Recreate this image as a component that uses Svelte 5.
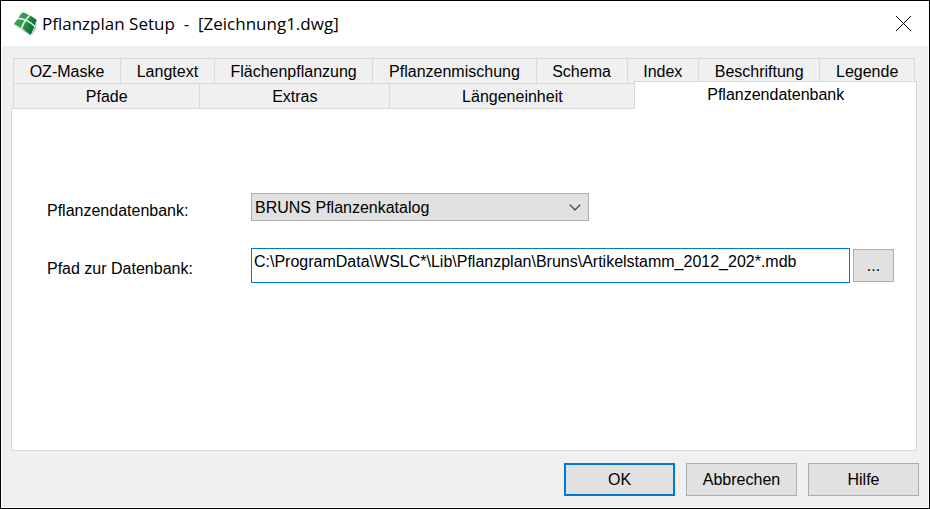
<script>
  const backTabs = ['OZ-Maske', 'Langtext', 'Flächenpflanzung', 'Pflanzenmischung', 'Schema', 'Index', 'Beschriftung', 'Legende'];
  const frontTabs = ['Pfade', 'Extras', 'Längeneinheit', 'Pflanzendatenbank'];
  let active = $state('Pflanzendatenbank');
  let path = $state('C:\\ProgramData\\WSLC*\\Lib\\Pflanzplan\\Bruns\\Artikelstamm_2012_202*.mdb');
</script>

<div class="dialog" role="dialog" aria-labelledby="dialog-title">
  <header>
    <svg class="logo" width="24" height="24" viewBox="0 0 24 24" aria-hidden="true">
      <defs>
        <linearGradient id="leaf" x1="0" y1="0.2" x2="1" y2="0.6">
          <stop offset="0" stop-color="#3fac58" />
          <stop offset="0.5" stop-color="#2b9a50" />
          <stop offset="1" stop-color="#04602e" />
        </linearGradient>
      </defs>
      <path d="M18.5 23.6 L24 8 L22.6 18 Z M1 13 L18 23.8 L15 20 Z" fill="#777" opacity="0.5" />
      <path d="M7.6 2.2 Q8.6 0.4 10.8 0.6 Q17.5 3.4 23.7 7.8 Q21.4 15.5 17.8 23 Q10.5 16.6 0.8 12 Q4.6 7.6 7.6 2.2 Z" fill="url(#leaf)" />
      <path d="M4 6.6 Q13.5 6.2 22 14.6 M16.6 3.4 Q10.5 9.5 8 18" fill="none" stroke="#e9f5ec" stroke-width="1.5" />
    </svg>
    <h1 id="dialog-title">Pflanzplan Setup&nbsp; -&nbsp; [Zeichnung1.dwg]</h1>
    <button class="close" aria-label="Schließen">
      <svg width="15" height="15" viewBox="0 0 15 15" aria-hidden="true">
        <path d="M0 0 L15 15 M15 0 L0 15" stroke="#000" stroke-width="1" />
      </svg>
    </button>
  </header>

  <main>
    <div class="tabs" role="tablist">
      {#each [backTabs, frontTabs] as row}
        <div class="row" role="presentation">
          {#each row as tab}
            <button role="tab" class="tab" class:active={tab === active} aria-selected={tab === active} onclick={() => (active = tab)}>{tab}</button>
          {/each}
        </div>
      {/each}
    </div>

    <section class="panel" role="tabpanel">
      <div class="field">
        <label for="database">Pflanzendatenbank:</label>
        <div class="select">
          <select id="database">
            <option>BRUNS Pflanzenkatalog</option>
          </select>
          <svg width="12" height="7" viewBox="0 0 12 7" aria-hidden="true">
            <path d="M0.7 0.7 L6 6 L11.3 0.7" fill="none" stroke="#333" stroke-width="1.2" />
          </svg>
        </div>
      </div>
      <div class="field">
        <label for="path">Pfad zur Datenbank:</label>
        <input id="path" type="text" bind:value={path} />
        <button class="button browse">...</button>
      </div>
    </section>
  </main>

  <footer>
    <button class="button default">OK</button>
    <button class="button">Abbrechen</button>
    <button class="button">Hilfe</button>
  </footer>
</div>

<style>
  :global(body) {
    margin: 0;
  }

  .dialog,
  .dialog * {
    box-sizing: border-box;
  }

  .dialog {
    display: flex;
    flex-direction: column;
    min-height: 100vh;
    border: 1px solid #000;
    background: #f0f0f0;
    box-shadow: inset 0 0 0 1px #fff;
    color: #000;
    font: 16px/20px 'Liberation Sans', Arial, sans-serif;
  }

  button,
  input,
  select {
    font: inherit;
    color: inherit;
    border-radius: 0;
    margin: 0;
  }

  header {
    display: flex;
    align-items: center;
    height: 45px;
    padding: 0 18px 0 12px;
    background: #fff;
  }

  .logo {
    flex: none;
  }

  h1 {
    flex: 1;
    margin: 0 0 0 5px;
    padding-top: 1px;
    font: 400 17px/24px 'Open Sans', 'Noto Sans', sans-serif;
  }

  .close {
    display: flex;
    padding: 0;
    border: 0;
    background: none;
  }

  main {
    display: flex;
    flex: 1;
    flex-direction: column;
    padding: 12px 12px 0 10px;
  }

  .tabs {
    padding: 0 2px;
  }

  .row {
    display: flex;
    height: 25px;
  }

  .tab {
    flex: 1 1 auto;
    padding: 2px 15px 0;
    border: 1px solid #d9d9d9;
    border-right-width: 0;
    border-bottom-width: 0;
    background: #f0f0f0;
    white-space: nowrap;
  }

  .tab:last-child {
    border-right-width: 1px;
  }

  .tab.active {
    position: relative;
    margin: -2px -2px -1px 0;
    padding-bottom: 3px;
    background: #fff;
  }

  .panel {
    display: flex;
    flex: 1;
    flex-direction: column;
    gap: 27px;
    padding: 84px 22px 20px 35px;
    border: 1px solid #d9d9d9;
    background: #fff;
  }

  .field {
    display: flex;
    align-items: center;
  }

  label {
    flex: none;
    width: 204px;
    padding-top: 7px;
  }

  .select {
    display: flex;
    align-items: center;
    width: 338px;
  }

  select {
    width: 100%;
    height: 28px;
    padding: 2px 30px 0 3px;
    border: 1px solid #adadad;
    background: #e1e1e1;
    appearance: none;
  }

  .select svg {
    flex: none;
    margin-left: -20px;
    pointer-events: none;
  }

  input {
    flex: 1;
    min-width: 0;
    height: 35px;
    padding: 0 2px 8px;
    border: 1px solid #0078d7;
    background: #fff;
    outline: 0;
  }

  footer {
    display: flex;
    justify-content: flex-end;
    gap: 11px;
    padding: 12px 10px;
  }

  .button {
    width: 111px;
    height: 33px;
    padding: 0;
    border: 1px solid #adadad;
    background: #e1e1e1;
  }

  .default {
    border: 2px solid #0078d7;
  }

  .browse {
    width: 41px;
    margin-left: 3px;
  }
</style>
